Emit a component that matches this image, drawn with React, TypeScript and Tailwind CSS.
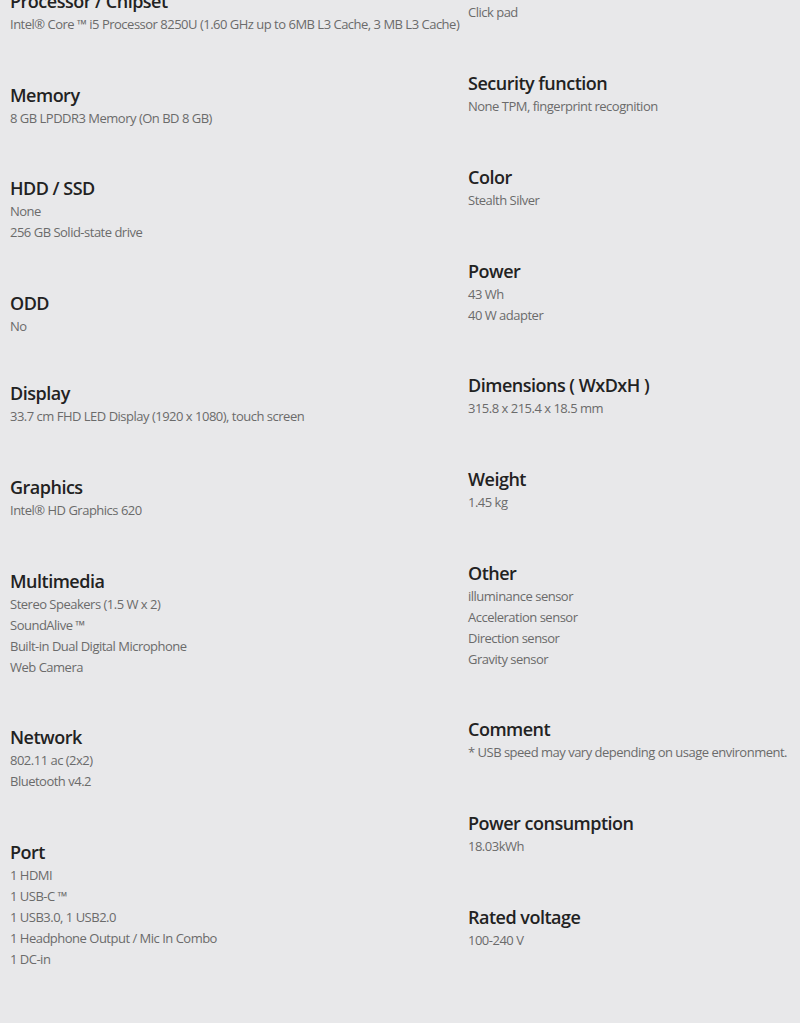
import React from 'react';

type Spec = { title: string; values: string[]; tight?: boolean };

const leftSpecs: Spec[] = [
  { title: 'Processor / Chipset', values: ['Intel® Core ™ i5 Processor 8250U (1.60 GHz up to 6MB L3 Cache, 3 MB L3 Cache)'] },
  { title: 'Memory', values: ['8 GB LPDDR3 Memory (On BD 8 GB)'], tight: true },
  { title: 'HDD / SSD', values: ['None', '256 GB Solid-state drive'] },
  { title: 'ODD', values: ['No'], tight: true },
  { title: 'Display', values: ['33.7 cm FHD LED Display (1920 x 1080), touch screen'] },
  { title: 'Graphics', values: ['Intel® HD Graphics 620'] },
  { title: 'Multimedia', values: ['Stereo Speakers (1.5 W x 2)', 'SoundAlive ™', 'Built-in Dual Digital Microphone', 'Web Camera'], tight: true },
  { title: 'Network', values: ['802.11 ac (2x2)', 'Bluetooth v4.2'] },
  { title: 'Port', values: ['1 HDMI', '1 USB-C ™', '1 USB3.0, 1 USB2.0', '1 Headphone Output / Mic In Combo', '1 DC-in'] },
];

const rightSpecs: Spec[] = [
  { title: 'Input Device', values: ['Click pad'] },
  { title: 'Security function', values: ['None TPM, fingerprint recognition'] },
  { title: 'Color', values: ['Stealth Silver'] },
  { title: 'Power', values: ['43 Wh', '40 W adapter'], tight: true },
  { title: 'Dimensions ( WxDxH )', values: ['315.8 x 215.4 x 18.5 mm'] },
  { title: 'Weight', values: ['1.45 kg'] },
  { title: 'Other', values: ['illuminance sensor', 'Acceleration sensor', 'Direction sensor', 'Gravity sensor'], tight: true },
  { title: 'Comment', values: ['* USB speed may vary depending on usage environment.'] },
  { title: 'Power consumption', values: ['18.03kWh'] },
  { title: 'Rated voltage', values: ['100-240 V'] },
];

// spacing between blocks is a little uneven on the original page
const SpecItem: React.FC<{ spec: Spec }> = ({ spec }) => (
  <div className={spec.title === 'ODD' ? 'mb-[44px]' : spec.tight ? 'mb-[47px]' : 'mb-[48px]'}>
    <h4 className="text-[18px] leading-[24px] font-semibold text-[#222] whitespace-nowrap tracking-[-0.5px]">
      {spec.title}
    </h4>
    <ul className="pt-[1px]">
      {spec.values.map((v) => (
        <li key={v} className="text-[13px] leading-[21px] text-[#6b6b6b] whitespace-nowrap tracking-[-0.5px]">
          {v}
        </li>
      ))}
    </ul>
  </div>
);

export default function App() {
  return (
    <div className="bg-white min-h-[1026px]" style={{ fontFamily: '"Open Sans", sans-serif' }}>
      <div className="h-[1023px] overflow-hidden bg-[#e8e8ea]">
        <div className="grid grid-cols-[458px_1fr] pl-[10px]">
          <div className="-mt-[11px]">
            {leftSpecs.map((s) => (
              <SpecItem key={s.title} spec={s} />
            ))}
          </div>
          <div className="-mt-[23px]">
            {rightSpecs.map((s) => (
              <SpecItem key={s.title} spec={s} />
            ))}
          </div>
        </div>
      </div>
    </div>
  );
}
